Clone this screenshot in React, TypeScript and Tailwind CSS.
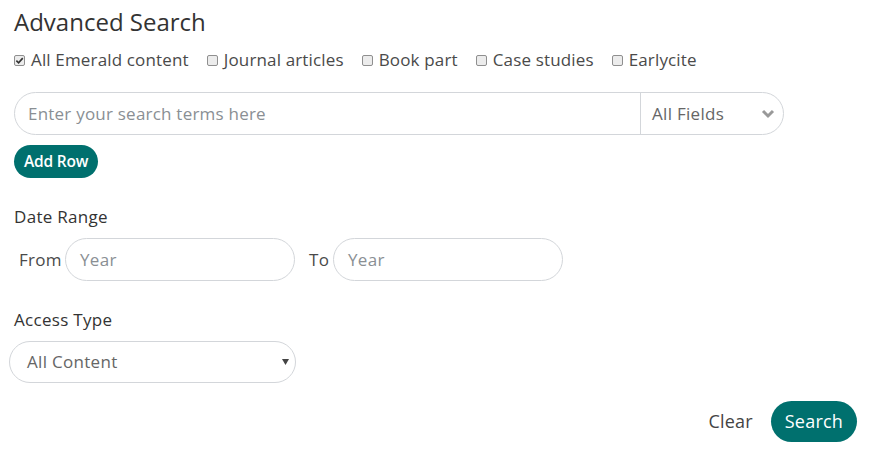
import React from "react";

function Box({ checked }: { checked?: boolean }) {
  return (
    <span className="inline-flex h-[11px] w-[11px] items-center justify-center rounded-[2px] border border-[#8f8f8f] bg-[#ececec]">
      {checked && (
        <svg width="9" height="9" viewBox="0 0 10 10">
          <path d="M1.5 5.2 L4 7.6 L8.6 2.4" fill="none" stroke="#333" strokeWidth="1.8" />
        </svg>
      )}
    </span>
  );
}

export default function App() {
  const cats = [
    { label: "All Emerald content", checked: true },
    { label: "Journal articles" },
    { label: "Book part" },
    { label: "Case studies" },
    { label: "Earlycite" },
  ];
  return (
    <div
      className="h-[462px] w-[876px] bg-white text-[#333]"
      style={{ fontFamily: '"Open Sans", sans-serif' }}
    >
      <div className="flex flex-col px-[14px] pt-[5px]">
        <h1 className="text-[24px] leading-[34px] font-normal text-[#333]">Advanced Search</h1>
        <div className="mt-[9px] flex items-center gap-[18px] text-[17px] leading-[24px] tracking-[0.15px] text-[#4a4a4a]">
          {cats.map((c) => (
            <label key={c.label} className="flex items-center gap-[6px]">
              <Box checked={c.checked} />
              <span>{c.label}</span>
            </label>
          ))}
        </div>
        <div className="mt-[20px] flex h-[43px] w-[770px] items-center rounded-full border border-[#d3d6da] bg-white">
          <div className="flex flex-1 items-center pl-[13px] text-[17px] tracking-[0.22px] text-[#8a8f94]">
            Enter your search terms here
          </div>
          <div className="flex h-full w-[143px] items-center justify-between border-l border-[#d3d6da] pl-[11px] pr-[8px] text-[17px] tracking-[0.3px] text-[#666]">
            <span>All Fields</span>
            <svg width="14" height="10" viewBox="0 0 14 10">
              <path d="M2 2 L7 7 L12 2" fill="none" stroke="#999" strokeWidth="3" />
            </svg>
          </div>
        </div>
        <div className="mt-[10px]">
          <button className="h-[33px] rounded-full bg-[#00706e] px-[10px] text-[15.5px] font-semibold tracking-[-0.2px] text-white">
            Add Row
          </button>
        </div>
        <div className="mt-[27px] text-[17px] leading-[24px] tracking-[0.3px] text-[#333]">Date Range</div>
        <div className="mt-[9px] flex items-center pl-[5px] text-[17px] tracking-[0.3px] text-[#4a4a4a]">
          <span className="w-[43px]">From</span>
          <div className="ml-[3px] flex h-[43px] w-[230px] items-center rounded-full border border-[#d3d6da] pl-[14px] text-[#8a8f94]">
            Year
          </div>
          <span className="ml-[14px] w-[21px]">To</span>
          <div className="ml-[3px] flex h-[43px] w-[230px] items-center rounded-full border border-[#d3d6da] pl-[14px] text-[#8a8f94]">
            Year
          </div>
        </div>
        <div className="mt-[27px] text-[17px] leading-[24px] tracking-[0.3px] text-[#333]">Access Type</div>
        <div className="-ml-[5px] mt-[9px] flex h-[42px] w-[287px] items-center justify-between rounded-full border border-[#d3d6da] pl-[17px] pr-[6px] text-[17px] tracking-[0.3px] text-[#666]">
          <span>All Content</span>
          <svg width="7" height="6" viewBox="0 0 7 6">
            <path d="M0 0 L7 0 L3.5 6 Z" fill="#444" />
          </svg>
        </div>
        <div className="mt-[18px] flex items-center justify-end gap-[18px] pr-[5px]">
          <span className="text-[18px] tracking-[0.2px] text-[#444]">Clear</span>
          <button className="h-[41px] rounded-full bg-[#00706e] px-[14px] text-[18px] tracking-[0.2px] font-normal text-white">
            Search
          </button>
        </div>
      </div>
    </div>
  );
}
